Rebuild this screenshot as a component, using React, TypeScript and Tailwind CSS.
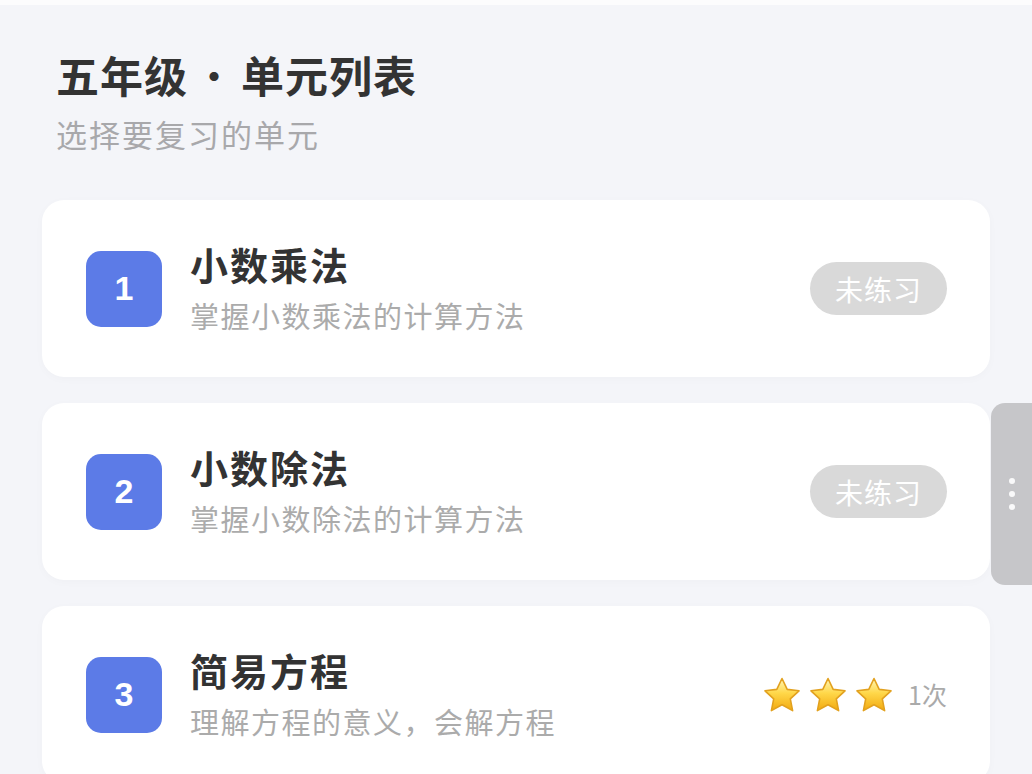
type Unit = {
  no: number;
  title: string;
  desc: string;
  stars?: number;
  times?: string;
};

const units: Unit[] = [
  { no: 1, title: "小数乘法", desc: "掌握小数乘法的计算方法" },
  { no: 2, title: "小数除法", desc: "掌握小数除法的计算方法" },
  { no: 3, title: "简易方程", desc: "理解方程的意义，会解方程", stars: 3, times: "1次" },
];

const cjk = { fontFamily: '"Noto Sans CJK SC", "Noto Sans", sans-serif' };

const Star = () => (
  <svg width="40" height="38" viewBox="0 0 40 38">
    <defs>
      <linearGradient id="starFill" x1="0" y1="0" x2="0" y2="1">
        <stop offset="0" stopColor="#fff6b8" />
        <stop offset="0.45" stopColor="#ffd84a" />
        <stop offset="1" stopColor="#f2a90f" />
      </linearGradient>
    </defs>
    <path
      d="M20 2.5 L25.2 13.4 L37 14.8 L28.3 22.9 L30.6 34.6 L20 28.8 L9.4 34.6 L11.7 22.9 L3 14.8 L14.8 13.4 Z"
      fill="url(#starFill)"
      stroke="#e2a11e"
      strokeWidth="1.6"
      strokeLinejoin="round"
    />
  </svg>
);

const UnitCard = ({ unit }: { unit: Unit }) => (
  <div className="h-[177px] bg-white rounded-[22px] shadow-[0_2px_10px_rgba(0,0,0,0.025)] flex items-center pl-[44px] pr-[43px]">
    <div className="w-[76px] h-[76px] rounded-[15px] bg-[#5c7be7] flex items-center justify-center text-white text-[34px] font-semibold shrink-0" style={{ fontFamily: '"Liberation Sans", Arial, sans-serif' }}>
      {unit.no}
    </div>
    <div className="ml-[28px] flex-1 flex flex-col">
      <div className="text-[38px] font-bold text-[#333] leading-[46px] tracking-[2px] -mt-[2px]">{unit.title}</div>
      <div className="text-[29px] text-[#ababab] leading-[40px] tracking-[1.5px] mt-[8px]">{unit.desc}</div>
    </div>
    {unit.stars ? (
      <div className="flex items-center">
        <div className="flex gap-[6px]">
          {Array.from({ length: unit.stars }).map((_, i) => (
            <Star key={i} />
          ))}
        </div>
        <span className="ml-[14px] text-[25px] text-[#aaa]">{unit.times}</span>
      </div>
    ) : (
      <div className="w-[137px] h-[53px] rounded-full bg-[#d9d9d9] text-white text-[28px] tracking-[1px] flex items-center justify-center">
        未练习
      </div>
    )}
  </div>
);

export default function App() {
  return (
    <div className="w-[1032px] h-[774px] bg-[#f4f5f9] overflow-hidden relative" style={cjk}>
      <div className="h-[5px] bg-[#fcfcfd]" />
      <div className="pl-[56px] pt-[41px]">
        <h1 className="text-[43px] font-bold text-[#333] leading-[56px] tracking-[1px] flex items-center">
          <span>五年级</span>
          <span className="w-[53px] text-center font-normal">·</span>
          <span>单元列表</span>
        </h1>
        <p className="text-[31px] text-[#a8a8ab] leading-[40px] tracking-[2px] mt-[12px]">选择要复习的单元</p>
      </div>
      <div className="px-[42px] mt-[46px] flex flex-col gap-[26px]">
        {units.map((u) => (
          <UnitCard key={u.no} unit={u} />
        ))}
      </div>
      <div className="absolute right-0 top-[403px] w-[41px] h-[182px] bg-[#c6c6c9] rounded-l-[14px] flex flex-col items-center justify-center gap-[7px]">
        <span className="w-[6px] h-[6px] rounded-full bg-white/90" />
        <span className="w-[6px] h-[6px] rounded-full bg-white/90" />
        <span className="w-[6px] h-[6px] rounded-full bg-white/90" />
      </div>
    </div>
  );
}
